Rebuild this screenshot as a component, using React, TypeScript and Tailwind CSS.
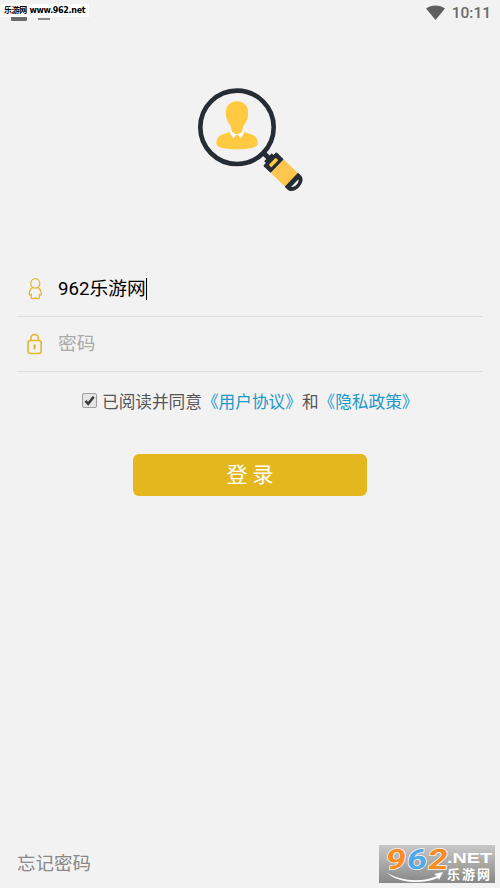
import { useState } from "react"

const SearchUserLogo = () => (
  <svg className="block" width="120" height="120" viewBox="0 0 120 120">
    <circle cx="47" cy="47.300" r="36.700" fill="none" stroke="#252c33" strokeWidth="4.600" />
    {/* person */}
    <path
      d="M26.300 63.500c0-3 1.200-6.500 4.200-8.200 3-1.700 7-2 9.700-4.100L47 55l6.800-3.800c2.700 2.100 6.700 2.400 9.700 4.100 3 1.700 4.200 5.200 4.200 8.200 0 4.200-10 5.700-20.700 5.700s-20.700-1.500-20.700-5.700z"
      fill="#ffca42"
    />
    <path d="M41 50.200l6 3.600-3.800 4.400-3.600-5.800zM53 50.200l-6 3.600 3.800 4.400 3.600-5.800z" fill="#fff" />
    <path
      d="M47 21.200c-6.800 0-11.200 4.900-11.200 11.300 0 5 1.500 9 3.700 11.700 1.600 2 1.900 4 2.100 6.300.2 1.800 3.200 3.500 5.400 3.500s5.200-1.700 5.400-3.500c.2-2.300.5-4.300 2.100-6.300 2.200-2.700 3.700-6.700 3.700-11.700 0-6.400-4.400-11.300-11.200-11.300z"
      fill="#ffca42"
    />
    {/* handle */}
    <g transform="translate(47 47.300) rotate(44)">
      <path d="M37-2.400h9v5h-9z" fill="#252c33" />
      <path d="M43-5.500h3.500v11H43z" fill="#252c33" />
      <rect x="45.500" y="-9.500" width="10.500" height="19" rx="1" fill="#252c33" />
      <rect x="49" y="-5" width="3.600" height="10" rx=".8" fill="#ffca42" />
      <rect x="56" y="-9.300" width="21" height="18.600" fill="#ffc64d" />
      <path d="M75.500-9.600h4c4.200 0 6.700 4.300 6.700 9.600s-2.500 9.600-6.700 9.600h-4z" fill="#252c33" />
      <path d="M80.300-5.300c1.800 1.200 2.400 3.200 2.400 5.300s-.6 4.100-2.400 5.300z" fill="#f2f2f2" />
    </g>
  </svg>
)

const UserIcon = () => (
  <svg className="block" width="16" height="24" viewBox="0 0 16 24" fill="none" stroke="#e5b72c" strokeWidth="1.300" strokeLinejoin="round" strokeLinecap="round">
    <ellipse cx="8.300" cy="6.400" rx="4.500" ry="4.700" />
    <path d="M5.600 10.500C3.400 12 2.300 14.400 2.300 17c0 1.300 1.100 1.300 1.900.3v3.100c0 .9.600 1.300 1.600 1.300 1.200 0 1.900-.4 2.500-1 .6.600 1.300 1 2.500 1 1 0 1.600-.4 1.600-1.300v-3.100c.8 1 1.900 1 1.900-.3 0-2.600-1.100-5-3.300-6.500" />
  </svg>
)

const LockIcon = () => (
  <svg className="block" width="16" height="24" viewBox="0 0 16 24" fill="none" stroke="#e5b72c" strokeWidth="1.600">
    <rect x="1" y="8.500" width="13.200" height="13" rx="2.400" />
    <path d="M3.900 8.500V6.300c0-2.400 1.500-3.800 3.700-3.800s3.700 1.400 3.700 3.800v2.200" />
    <path d="M7.600 13.300v3" strokeWidth="2.200" strokeLinecap="round" />
  </svg>
)

const StatusBar = () => (
  <header className="relative flex h-[26px] items-center justify-end pr-[9px] text-[#6a6a6a]">
    <svg className="mr-[7px]" width="19" height="16" viewBox="0 0 19 16">
      <path d="M0 3.600C5.400-.6 13.600-.6 19 3.600L9.500 15z" fill="#5f5f5f" />
    </svg>
    <span className="text-[15.500px] font-medium leading-[26px]">10:11</span>
    {/* notification icons, partly hidden under the site tag */}
    <div className="absolute left-[11px] top-[15px] h-[6px] w-[16px] rounded-b-[1px] bg-[#6b6b6b]" />
    <div className="absolute left-[38px] top-[18px] h-[2px] w-[12px] bg-[#8a8a8a]" />
    <div className="absolute left-0 top-[4px] flex h-[13px] w-[89px] items-center bg-white pl-[4px] text-black">
      <span className="whitespace-nowrap font-['DejaVu_Sans','Noto_Sans_CJK_SC',sans-serif] text-[8px] font-bold leading-[13px] tracking-[-0.330px]">
        乐游网 www.962.net
      </span>
    </div>
  </header>
)

const SiteBadge = () => (
  <svg className="absolute bottom-[5px] right-[5px] overflow-visible" width="116" height="38" viewBox="0 0 116 38">
    <defs>
      <linearGradient id="badge" x1="0" y1="0" x2="0" y2="1">
        <stop offset="0" stopColor="#c8c8c8" />
        <stop offset="1" stopColor="#888" />
      </linearGradient>
    </defs>
    <rect width="116" height="38" fill="url(#badge)" />
    <path d="M77 20l8-8h12l9 6-7 10H84z" fill="none" stroke="#b3a67c" strokeWidth="1.500" />
    <g transform="translate(3 0) skewX(-7)" fontFamily="Roboto, sans-serif" fontWeight="bold" fontSize="28" stroke="#f4f4f4" strokeWidth="1.500" paintOrder="stroke">
      <text x="6" y="24" fill="#f98b22" textLength="20" lengthAdjust="spacingAndGlyphs">9</text>
      <text x="27" y="24" fill="#4fa9e6" textLength="20" lengthAdjust="spacingAndGlyphs">6</text>
      <text x="48" y="24" fill="#f98b22" textLength="20" lengthAdjust="spacingAndGlyphs">2</text>
    </g>
    <text x="68" y="18" fill="#fff" fontFamily="'Liberation Sans', sans-serif" fontWeight="bold" fontSize="15" textLength="45" lengthAdjust="spacingAndGlyphs">.NET</text>
    <text x="68" y="34" fill="#fff" fontFamily="'Liberation Sans', 'Noto Sans CJK SC', sans-serif" fontWeight="bold" fontSize="13" textLength="43">乐游网</text>
    <path d="M7 27c13 9 36 11 51 4l-3-2 9-2-4 8-1-2C43 40 18 38 7 27z" fill="#fff" />
  </svg>
)

const App = () => {
  const [agreed, setAgreed] = useState(true)

  return (
    <div className="relative flex h-[888px] w-[500px] flex-col overflow-hidden bg-[#f2f2f2] font-[Roboto,'Noto_Sans_CJK_SC',sans-serif]">
      <StatusBar />

      <div className="mt-[54px] pl-[190px]">
        <SearchUserLogo />
      </div>

      {/* login form */}
      <div className="mt-[62px] px-[17px]">
        <div className="flex h-[55px] items-center border-b border-[#dcdcdc] pl-[10px]">
          <UserIcon />
          <div className="ml-[15px] flex items-center text-[18.700px] text-black">
            <span className="leading-[24px]">962乐游网</span>
            <span className="h-[22px] w-px bg-black" />
          </div>
        </div>
        <div className="flex h-[55px] items-center border-b border-[#dcdcdc] pl-[10px]">
          <LockIcon />
          <span className="ml-[15px] text-[18.700px] leading-[24px] text-[#aaa]">密码</span>
        </div>
      </div>

      <div className="mt-[18px] flex h-[26px] items-center pl-[82px]">
        <button
          className="mb-[6px] mr-[5px] flex h-[15px] w-[15px] items-center justify-center rounded-[2px] border border-[#a0a0a0] bg-[#e4e4e4]"
          onClick={() => setAgreed(!agreed)}
        >
          {agreed && (
            <svg width="11" height="11" viewBox="0 0 11 11">
              <path d="M1.500 5.800l2.700 3L9.700 1.800" fill="none" stroke="#3c3c3c" strokeWidth="2.600" />
            </svg>
          )}
        </button>
        <span className="whitespace-nowrap text-[16.660px] leading-[26px] text-[#555]">
          已阅读并同意<span className="text-[#1c98c9]">《用户协议》</span>和<span className="text-[#1c98c9]">《隐私政策》</span>
        </span>
      </div>

      <button className="mx-auto mt-[38px] h-[42px] w-[234px] shrink-0 rounded-[6px] bg-[#e5b71e] text-[21px] leading-[42px] text-white">
        登 录
      </button>

      <a className="mb-[10px] ml-[17px] mt-auto text-[18.500px] leading-[28px] text-[#888]">忘记密码</a>
      <SiteBadge />
    </div>
  )
}

export default App
